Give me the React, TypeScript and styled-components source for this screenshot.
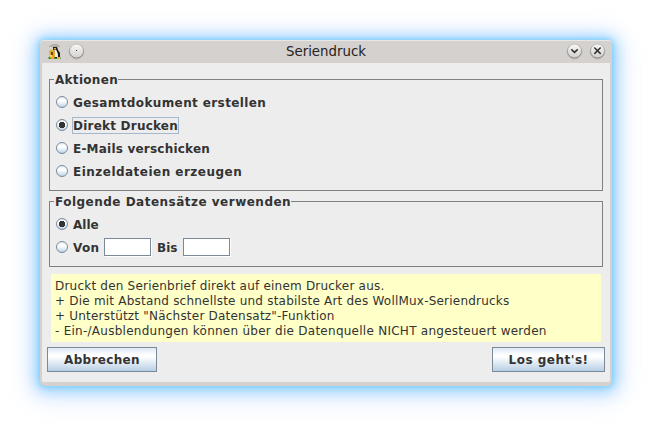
import React from 'react';
import styled, { createGlobalStyle } from 'styled-components';

const GlobalStyle = createGlobalStyle`
  * { box-sizing: border-box; }
  body { margin: 0; background: #fff; }
`;

const Desktop = styled.main`
  width: 652px;
  height: 426px;
  padding: 40px;
  overflow: hidden;
  background: #fff;
  font-family: 'DejaVu Sans', sans-serif;
  font-size: 12px;
  color: #333;
`;

const Window = styled.section`
  display: flex;
  flex-direction: column;
  width: 572px;
  height: 346px;
  border: solid #d5d1ce;
  border-width: 0 2px 4px;
  border-radius: 5px;
  background: #ededed;
  box-shadow: 0 0 4px 1px rgba(120, 205, 252, 0.8), 0 1px 14px 4px rgba(112, 200, 255, 0.7),
    0 3px 26px 8px rgba(160, 195, 255, 0.4);
`;

const TitleBar = styled.header`
  display: grid;
  grid-template-columns: 48px 1fr 48px;
  align-items: center;
  height: 23px;
  flex: none;
  margin: 0 -2px;
  padding: 0 6px 1px 7px;
  border-top: 1px solid #e9e7e5;
  border-radius: 4px 4px 0 0;
  background: #d5d1ce;
`;

const TitleGroup = styled.div<{ $gap: number; $end?: boolean }>`
  display: flex;
  align-items: center;
  justify-content: ${(p) => (p.$end ? 'flex-end' : 'flex-start')};
  gap: ${(p) => p.$gap}px;
`;

const Title = styled.h1`
  margin: 0 1px 0 0;
  font-size: 13.33px;
  font-weight: 400;
  line-height: 20px;
  text-align: center;
  color: #26231f;
`;

const Content = styled.div`
  display: flex;
  flex-direction: column;
  padding: 16px 5px 0 7px;
`;

const Group = styled.fieldset<{ $height: number }>`
  display: block;
  position: relative;
  width: 554px;
  height: ${(p) => p.$height}px;
  margin: 0 0 10px;
  padding: 11px 0 0 6px;
  border: 1px solid #808080;
`;

const GroupTitle = styled.div<{ $spacing: number }>`
  position: absolute;
  top: -7px;
  left: 4px;
  padding: 0 0 0 1px;
  background: #ededed;
  font-weight: 700;
  line-height: 14px;
  letter-spacing: ${(p) => p.$spacing}px;
  white-space: nowrap;
`;

const Row = styled.div`
  display: flex;
  align-items: center;
  height: 23px;
`;

const Caption = styled.span<{ $focused?: boolean; $width?: number; $spacing?: number }>`
  display: block;
  height: 17px;
  width: ${(p) => (p.$width ? `${p.$width}px` : 'auto')};
  margin-left: 4px;
  padding-left: 1px;
  outline: ${(p) => (p.$focused ? '1px solid #a3b8cc' : 'none')};
  outline-offset: -1px;
  font-weight: 700;
  line-height: 19px;
  letter-spacing: ${(p) => p.$spacing ?? 0}px;
  white-space: nowrap;
`;

const NumberField = styled.input`
  width: 47px;
  height: 18px;
  margin: 0 1px 1px 0;
  padding: 1px 3px;
  border: 1px solid #7a8a99;
  border-radius: 0;
  background: #fff;
  box-shadow: 1px 1px 0 #fff;
  font: inherit;
  outline: none;
`;

const Notes = styled.div`
  width: 550px;
  height: 68px;
  margin: -3px 0 5px 2px;
  padding: 5px 4px 3px;
  background: #ffffc8;
  line-height: 15px;
  white-space: nowrap;
`;

const NoteLine = styled.div<{ $spacing?: number }>`
  letter-spacing: ${(p) => p.$spacing ?? 0.21}px;
`;

const Footer = styled.footer`
  display: flex;
  justify-content: space-between;
  width: 558px;
  margin-left: -2px;
`;

const Button = styled.button<{ $width: number; $spacing: number }>`
  width: ${(p) => p.$width}px;
  height: 25px;
  padding: 1px 0 0;
  border: 1px solid #7a8a99;
  border-radius: 0;
  background: linear-gradient(#dde8f3 0, #fff 30%, #fff 38%, #b8cfe5 100%);
  font: 700 12px 'DejaVu Sans', sans-serif;
  letter-spacing: ${(p) => p.$spacing}px;
  color: #333;
`;

const Icon = styled.svg`
  display: block;
  flex: none;
`;

const RadioMark = styled(Icon)`
  margin-bottom: 1px;
`;

function Radio({ checked }: { checked?: boolean }) {
  return (
    <RadioMark width="12" height="12" viewBox="0 0 12 12">
      <defs>
        <linearGradient id="radioFill" x1="0" y1="0" x2="0" y2="1">
          <stop offset="0" stopColor="#dde8f3" />
          <stop offset=".32" stopColor="#fff" />
          <stop offset=".42" stopColor="#fff" />
          <stop offset="1" stopColor="#b8cfe5" />
        </linearGradient>
      </defs>
      <circle cx="6" cy="6" r="5.5" fill="url(#radioFill)" stroke="#7a8a99" />
      {checked && <path d="M4 3h4v1h1v4h-1v1h-4v-1h-1v-4h1z" fill="#333" shapeRendering="crispEdges" />}
    </RadioMark>
  );
}

function WindowButton({ kind }: { kind: 'dot' | 'chevron' | 'close' }) {
  return (
    <Icon width="17" height="17" viewBox="0 0 17 17">
      <defs>
        <linearGradient id="knobFill" x1="0" y1="0" x2="0" y2="1">
          <stop offset="0" stopColor="#f8f8f7" />
          <stop offset="1" stopColor="#d3d0cd" />
        </linearGradient>
        <linearGradient id="knobEdge" x1="0" y1="0" x2="0" y2="1">
          <stop offset="0" stopColor="#c4c1be" />
          <stop offset="1" stopColor="#85817e" />
        </linearGradient>
      </defs>
      <circle cx="8.5" cy="8.7" r="7.4" fill="none" stroke="#aaa6a3" strokeOpacity=".6" />
      <circle cx="8.5" cy="8" r="7" fill="url(#knobFill)" stroke="url(#knobEdge)" />
      {kind === 'dot' && <rect x="8" y="7" width="1" height="1" fill="#333" />}
      {kind === 'chevron' && <path d="M5.3 6.4l3.2 3 3.2-3" fill="none" stroke="#333" strokeWidth="1.5" />}
      {kind === 'close' && <path d="M5.3 4.5l6.4 6.4M11.7 4.5l-6.4 6.4" fill="none" stroke="#333" strokeWidth="1.5" />}
    </Icon>
  );
}

function PenguinIcon() {
  return (
    <Icon width="16" height="18" viewBox="0 0 16 18">
      <path d="M1 15l2-2h9l2 2-1 1H2z" fill="#3a8c2d" />
      <path d="M6 4h4l1 3 2 3v4l-2 1H7z" fill="#191919" />
      <path d="M7.3 7h2l1.6 4v3H8z" fill="#f6f6f1" />
      <path d="M2 8l2-1h3l1 2v5l-1 2H4l-1-2z" fill="#e4a52b" />
      <path d="M4 9h2v3H4z" fill="#684615" />
      <path d="M2 3l4-2h4l3 2v1H2z" fill="#b5afa3" />
      <path d="M7 5h2v1.4H7zM10 14h3v2h-3z" fill="#f3b32e" />
      <path d="M3 12h2v2H3z" fill="#f7d865" />
    </Icon>
  );
}

interface OptionProps {
  label: string;
  checked?: boolean;
  focused?: boolean;
  width?: number;
  spacing?: number;
}

function Option({ label, checked, focused, width, spacing }: OptionProps) {
  return (
    <Row>
      <Radio checked={checked} />
      <Caption $focused={focused} $width={width} $spacing={spacing}>{label}</Caption>
    </Row>
  );
}

export default function App() {
  return (
    <>
      <GlobalStyle />
      <Desktop>
        <Window>
          <TitleBar>
            <TitleGroup $gap={5}>
              <PenguinIcon />
              <WindowButton kind="dot" />
            </TitleGroup>
            <Title>Seriendruck</Title>
            <TitleGroup $gap={6} $end>
              <WindowButton kind="chevron" />
              <WindowButton kind="close" />
            </TitleGroup>
          </TitleBar>
          <Content>
            <Group $height={112}>
              <GroupTitle $spacing={0.3}>Aktionen</GroupTitle>
              <Option label="Gesamtdokument erstellen" spacing={0.39} />
              <Option label="Direkt Drucken" checked focused width={107} spacing={0.22} />
              <Option label="E-Mails verschicken" spacing={0.21} />
              <Option label="Einzeldateien erzeugen" spacing={0.48} />
            </Group>
            <Group $height={66}>
              <GroupTitle $spacing={0.49}>Folgende Datensätze verwenden</GroupTitle>
              <Option label="Alle" checked />
              <Row>
                <Radio />
                <Caption $width={32} $spacing={0.3}>Von</Caption>
                <NumberField aria-label="Von" />
                <Caption $width={27}>Bis</Caption>
                <NumberField aria-label="Bis" />
              </Row>
            </Group>
            <Notes>
              <NoteLine>Druckt den Serienbrief direkt auf einem Drucker aus.</NoteLine>
              <NoteLine>+ Die mit Abstand schnellste und stabilste Art des WollMux-Seriendrucks</NoteLine>
              <NoteLine>+ Unterstützt "Nächster Datensatz"-Funktion</NoteLine>
              <NoteLine $spacing={0.26}>- Ein-/Ausblendungen können über die Datenquelle NICHT angesteuert werden</NoteLine>
            </Notes>
            <Footer>
              <Button $width={110} $spacing={0.33}>Abbrechen</Button>
              <Button $width={113} $spacing={0.5}>Los geht's!</Button>
            </Footer>
          </Content>
        </Window>
      </Desktop>
    </>
  );
}
